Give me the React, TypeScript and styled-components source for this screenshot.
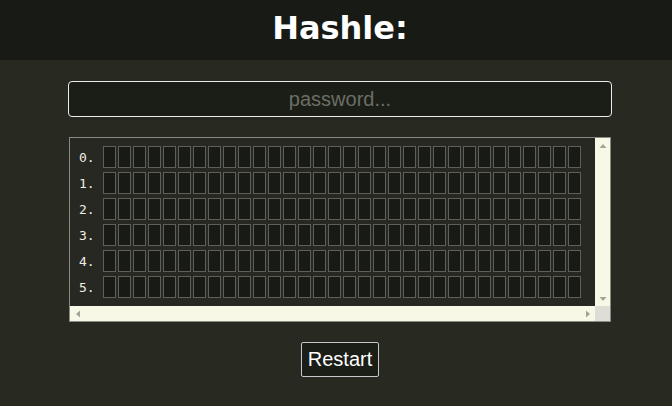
import React from "react";
import styled, { createGlobalStyle } from "styled-components";

const Global = createGlobalStyle`
  html, body { margin: 0; padding: 0; }
  body {
    background: #282a22;
    font-family: "Liberation Sans", Arial, sans-serif;
    width: 672px;
    height: 406px;
    overflow: hidden;
  }
`;

const Header = styled.header`
  height: 60px;
  background: #171a15;
  display: flex;
  align-items: center;
  justify-content: center;
  padding: 0 0 5px 8px;
  box-sizing: border-box;
`;

const Title = styled.h1`
  margin: 0;
  font-family: "DejaVu Sans", sans-serif;
  font-weight: bold;
  font-size: 32px;
  color: #ffffff;
  line-height: 1;
`;

const Main = styled.main`
  display: flex;
  flex-direction: column;
  align-items: center;
  gap: 20px;
  padding: 21px 0 0 8px;
`;

const PasswordInput = styled.input`
  width: 544px;
  height: 36px;
  box-sizing: border-box;
  background: #1b1d17;
  border: 1px solid #ececec;
  border-radius: 4px;
  color: #e0e0e0;
  caret-color: #ffffff;
  font-family: "Liberation Sans", Arial, sans-serif;
  font-size: 20px;
  text-align: center;
  outline: none;
  &::placeholder { color: #6c6e66; }
`;

const Board = styled.div`
  width: 542px;
  height: 185px;
  box-sizing: border-box;
  border: 1px solid #8a8a84;
  background: #262821;
  display: grid;
  grid-template-columns: 1fr 15px;
  grid-template-rows: 1fr 15px;
`;

const Viewport = styled.div`
  overflow: hidden;
`;

const ScrollTrack = styled.div<{ $vertical?: boolean }>`
  background: #f8f8e6;
  display: flex;
  flex-direction: ${(p) => (p.$vertical ? "column" : "row")};
  justify-content: space-between;
  align-items: center;
`;

const ScrollButton = styled.div`
  width: 15px;
  height: 15px;
  display: flex;
  align-items: center;
  justify-content: center;
  color: #a3a39c;
`;

const Corner = styled.div`
  background: #deded6;
`;

const Rows = styled.div`
  display: flex;
  flex-direction: column;
  gap: 4px;
  padding: 8px;
`;

const Row = styled.div`
  display: flex;
  align-items: center;
  gap: 8px;
`;

const Label = styled.span`
  font-family: "DejaVu Sans Mono", monospace;
  font-size: 13px;
  color: #f0eee4;
  width: 16px;
  padding-left: 1px;
`;

const Cells = styled.div`
  display: flex;
  gap: 2px;
`;

const Cell = styled.div`
  width: 13px;
  height: 22px;
  box-sizing: border-box;
  border: 1px solid #5e6058;
  background: #181a15;
`;

const RestartButton = styled.button`
  height: 35px;
  padding: 0 6px;
  background: #1b1d17;
  border: 1px solid #c4c8cc;
  border-radius: 2px;
  color: #ffffff;
  font-family: "Liberation Sans", Arial, sans-serif;
  font-size: 20px;
  cursor: pointer;
`;

type Dir = "up" | "down" | "left" | "right";
const arrowPoints: Record<Dir, string> = {
  up: "0.5,6 4,2 7.5,6",
  down: "0.5,2 4,6 7.5,2",
  left: "6,0.5 2,4 6,7.5",
  right: "2,0.5 6,4 2,7.5",
};

function Arrow({ dir }: { dir: Dir }) {
  return (
    <ScrollButton>
      <svg width="8" height="8" viewBox="0 0 8 8">
        <polygon points={arrowPoints[dir]} fill="currentColor" />
      </svg>
    </ScrollButton>
  );
}

const rows = [0, 1, 2, 3, 4, 5];
const cells = Array.from({ length: 32 }, (_, i) => i);

export default function App() {
  return (
    <>
      <Global />
      <Header>
        <Title>Hashle:</Title>
      </Header>
      <Main>
        <PasswordInput placeholder="password..." autoFocus />
        <Board>
          <Viewport>
            <Rows>
              {rows.map((r) => (
                <Row key={r}>
                  <Label>{r}.</Label>
                  <Cells>
                    {cells.map((c) => (
                      <Cell key={c} />
                    ))}
                  </Cells>
                </Row>
              ))}
            </Rows>
          </Viewport>
          <ScrollTrack $vertical>
            <Arrow dir="up" />
            <Arrow dir="down" />
          </ScrollTrack>
          <ScrollTrack>
            <Arrow dir="left" />
            <Arrow dir="right" />
          </ScrollTrack>
          <Corner />
        </Board>
        <RestartButton>Restart</RestartButton>
      </Main>
    </>
  );
}
